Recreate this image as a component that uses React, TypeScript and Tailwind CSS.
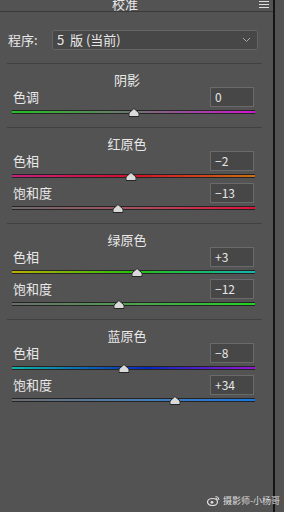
import React from 'react';

type Slider = { label: string; value: number; track: string };
type Section = { title: string; sliders: Slider[] };

const sections: Section[] = [
    {
        title: '阴影',
        sliders: [
            { label: '色调', value: 0, track: 'bg-[linear-gradient(to_right,#1fc21f,#6a7a6a_45%,#7a6a7a_55%,#d214d2)]' },
        ],
    },
    {
        title: '红原色',
        sliders: [
            { label: '色相', value: -2, track: 'bg-[linear-gradient(to_right,#c4207e,#d4102c_50%,#c8700c)]' },
            { label: '饱和度', value: -13, track: 'bg-[linear-gradient(to_right,#6c6c6c,#a8505e_50%,#e4103a)]' },
        ],
    },
    {
        title: '绿原色',
        sliders: [
            { label: '色相', value: 3, track: 'bg-[linear-gradient(to_right,#bcac00,#28c010_50%,#10b4b0)]' },
            { label: '饱和度', value: -12, track: 'bg-[linear-gradient(to_right,#6c6c6c,#50a050_50%,#20d420)]' },
        ],
    },
    {
        title: '蓝原色',
        sliders: [
            { label: '色相', value: -8, track: 'bg-[linear-gradient(to_right,#10b4a4,#0828c0_55%,#9418d0)]' },
            { label: '饱和度', value: 34, track: 'bg-[linear-gradient(to_right,#6c6c6c,#4a7cb0_50%,#1878e4)]' },
        ],
    },
];

const fmt = (v: number) => (v > 0 ? `+${v}` : `${v}`.replace('-', '−'));

const Thumb: React.FC = () => (
    <svg width="11" height="9" viewBox="0 0 11 9">
        <path d="M5.5 0.5 L10.5 5 V8.5 H0.5 V5 Z" fill="#dadada" stroke="#262626" strokeWidth="1" />
    </svg>
);

const SliderRow: React.FC<{ s: Slider; first: boolean }> = ({ s, first }) => (
    <div className={first ? '' : 'mt-[5px]'}>
        <div className="ml-[12px] w-[242px] h-[20px] flex items-center justify-between">
            <span className="pl-[1px] text-[13px] leading-[20px] text-[#e8e8e8]">{s.label}</span>
            <div className="w-[44px] h-[20px] bg-[#474747] border border-[#6a6a6a] text-[12px] leading-[18px] pl-[4px] text-[#e6e6e6]">
                {fmt(s.value)}
            </div>
        </div>
        <div className="relative ml-[12px] w-[243px] mt-[3px]">
            <div className={`h-[4px] border-y border-[#242424] ${s.track}`} />
            <div
                className="absolute top-[-2px] -translate-x-1/2"
                style={{ left: `${((s.value + 100) / 200) * 100}%` }}
            >
                <Thumb />
            </div>
        </div>
    </div>
);

export default function App() {
    return (
        <div className="relative w-[284px] h-[512px] bg-[#535353] flex overflow-hidden font-['Noto_Sans_CJK_SC',sans-serif]">
            <div className="w-[273px] flex flex-col">
                <div className="h-[12px] border-b border-[#3a3a3a] flex overflow-hidden">
                    <div className="w-[250px] flex justify-center">
                        <span className="mt-[-3px] text-[13px] leading-[13px] text-[#e8e8e8]">校准</span>
                    </div>
                    <div className="ml-[9px] w-[10px] flex flex-col gap-[2px] pt-[1px]">
                        <div className="h-[1px] bg-[#dddddd]" />
                        <div className="h-[1px] bg-[#dddddd]" />
                        <div className="h-[1px] bg-[#dddddd]" />
                    </div>
                </div>

                <div className="mt-[18px] h-[20px] flex items-center">
                    <span className="ml-[8px] w-[44px] text-[13px] leading-[20px] text-[#e8e8e8]">程序:</span>
                    <div className="w-[206px] h-[20px] bg-[#474747] border border-[#636363] rounded-[2px] flex items-center justify-between pl-[4px] pr-[6px]">
                        <span className="text-[13px] leading-[18px] text-[#e8e8e8] whitespace-pre">5  版 (当前)</span>
                        <svg width="9" height="6" viewBox="0 0 9 6">
                            <path d="M1 1 L4.5 4.5 L8 1" fill="none" stroke="#a8a8a8" strokeWidth="1" />
                        </svg>
                    </div>
                </div>

                {sections.map((sec) => (
                    <div key={sec.title}>
                        <div className="mt-[13px] ml-[7px] w-[255px] h-[1px] bg-[#404040]" />
                        <div className="mt-[9px] h-[14px] ml-[12px] w-[243px] pr-[13px] text-center text-[13px] leading-[14px] text-[#e8e8e8]">
                            {sec.title}
                        </div>
                        {sec.sliders.map((s, i) => (
                            <SliderRow key={s.label} s={s} first={i === 0} />
                        ))}
                    </div>
                ))}
            </div>
            <div className="w-[2px] h-full bg-[#151515]" />
            <div className="flex-1" />

            <div className="absolute right-[4px] bottom-[6px] flex items-center gap-[3px]">
                <svg width="13" height="11" viewBox="0 0 13 11">
                    <ellipse cx="5.5" cy="7" rx="5" ry="3.5" fill="none" stroke="#e0e0e0" strokeWidth="1.2" />
                    <circle cx="5" cy="7.3" r="1.4" fill="#e0e0e0" />
                    <path d="M8.5 1.5 A3.5 3.5 0 0 1 12 5" fill="none" stroke="#e0e0e0" strokeWidth="1" />
                    <path d="M8.5 3.2 A1.8 1.8 0 0 1 10.3 5" fill="none" stroke="#e0e0e0" strokeWidth="1" />
                </svg>
                <span className="text-[9px] leading-[10px] text-[#dcdcdc]">摄影师-小杨哥</span>
            </div>
        </div>
    );
}
